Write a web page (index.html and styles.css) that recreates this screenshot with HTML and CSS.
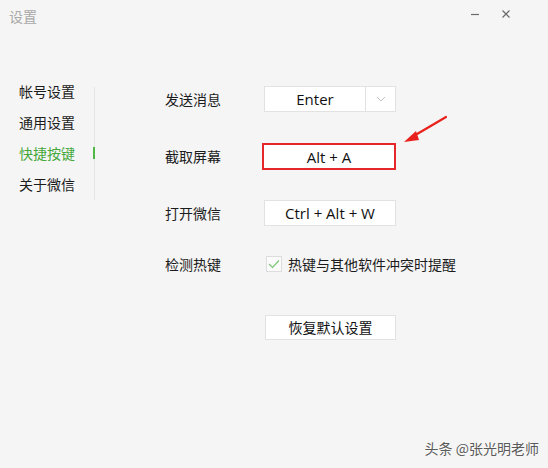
FILE: index.html
```
<!DOCTYPE html>
<html lang="zh-CN">
<head>
    <meta charset="utf-8">
    <title>设置</title>
    <link rel="stylesheet" href="styles.css">
</head>
<body>
    <div class="window">
        <div class="titlebar">
            <span class="title">设置</span>
            <div class="controls">
                <svg class="ctl" width="10" height="10" viewBox="0 0 10 10"><path d="M1 5.5h8" stroke="#6a6a6a" stroke-width="1.2"/></svg>
                <svg class="ctl" width="10" height="10" viewBox="0 0 10 10"><path d="M1.5 1.5l7 7M8.5 1.5l-7 7" stroke="#6a6a6a" stroke-width="1.2"/></svg>
            </div>
        </div>

        <div class="main">
            <div class="sidebar">
                <ul class="nav">
                    <li>帐号设置</li>
                    <li>通用设置</li>
                    <li class="active">快捷按键</li>
                    <li>关于微信</li>
                </ul>
            </div>

            <div class="content">
                <div class="row">
                    <span class="label">发送消息</span>
                    <div class="box select">
                        <span class="val">Enter</span>
                        <span class="drop">
                            <svg width="10" height="6" viewBox="0 0 10 6"><path d="M1 1l4 4 4-4" fill="none" stroke="#c4c4c4" stroke-width="1"/></svg>
                        </span>
                    </div>
                </div>
                <div class="row">
                    <span class="label">截取屏幕</span>
                    <div class="box marked">Alt + A</div>
                </div>
                <div class="row">
                    <span class="label">打开微信</span>
                    <div class="box">Ctrl + Alt + W</div>
                </div>
                <div class="row row-check">
                    <span class="label">检测热键</span>
                    <label class="check">
                        <span class="tick">
                            <svg width="12" height="10" viewBox="0 0 12 10"><path d="M1 5l3.5 3.5L11 1.5" fill="none" stroke="#7cc576" stroke-width="1.2"/></svg>
                        </span>
                        热键与其他软件冲突时提醒
                    </label>
                </div>
                <div class="row row-reset">
                    <span class="label"></span>
                    <div class="box btn">恢复默认设置</div>
                </div>
            </div>
        </div>

        <svg class="arrow" width="50" height="32" viewBox="0 0 50 32">
            <path d="M46 2L12 22" stroke="#e8211c" stroke-width="2.2" stroke-linecap="round"/>
            <path d="M4 27L16 16L19 25Z" fill="#e8211c"/>
        </svg>

        <div class="mark">头条 @张光明老师</div>
    </div>
</body>
</html>
```

FILE: styles.css
```
body {
    margin: 0;
    font-family: "Noto Sans CJK SC", sans-serif;
    font-size: 14px;
    color: #1c1c1c;
}
.window {
    position: relative;
    width: 548px;
    height: 468px;
    background: #f5f5f5;
    overflow: hidden;
}
.titlebar {
    height: 32px;
    display: flex;
    justify-content: space-between;
    align-items: center;
    padding: 0 37px 0 9px;
}
.title {
    color: #a8a8a8;
    font-size: 14px;
    margin-top: -1px;
}
.controls {
    display: flex;
    gap: 21px;
    margin-top: -5px;
}
.main {
    display: flex;
    padding-top: 54px;
}
.sidebar {
    position: relative;
    width: 94px;
    height: 113px;
    margin-top: 1px;
    border-right: 1px solid #e6e6e6;
}
.nav {
    list-style: none;
    margin: -11px 0 0;
    padding: 0 0 0 19px;
}
.nav li {
    line-height: 31px;
    height: 31px;
}
.nav li.active {
    color: #45a83b;
    position: relative;
}
.nav li.active::after {
    content: "";
    position: absolute;
    left: 74px;
    top: 9px;
    width: 2px;
    height: 12px;
    background: #50b845;
}
.content {
    padding-left: 70px;
    display: flex;
    flex-direction: column;
    gap: 31px;
}
.row {
    display: flex;
    align-items: center;
    height: 26px;
}
.row-check {
    margin-top: -6px;
}
.row-reset {
    margin-top: 6px;
}
.label {
    width: 99px;
    flex: none;
}
.box {
    box-sizing: border-box;
    width: 132px;
    height: 26px;
    background: #fff;
    border: 1px solid #e2e2e2;
    display: flex;
    align-items: center;
    justify-content: center;
    font-family: "Open Sans", sans-serif;
    font-size: 15px;
    color: #111;
}
.select {
    justify-content: flex-start;
}
.select .val {
    width: 100px;
    text-align: center;
}
.select .drop {
    flex: 1;
    height: 100%;
    border-left: 1px solid #e2e2e2;
    display: flex;
    align-items: center;
    justify-content: center;
}
.marked {
    border: 2px solid #e5262a;
    width: 134px;
    height: 27px;
    margin-left: -2px;
    margin-top: 1px;
}
.check {
    display: flex;
    align-items: center;
    gap: 6px;
    margin-left: 2px;
}
.tick {
    box-sizing: border-box;
    width: 16px;
    height: 16px;
    border: 1px solid #dcdcdc;
    background: #fbfbfb;
    display: flex;
    align-items: center;
    justify-content: center;
}
.btn {
    font-family: "Noto Sans CJK SC", sans-serif;
    font-size: 14px;
    margin-left: 1px;
    width: 131px;
    height: 25px;
}
.arrow {
    position: absolute;
    left: 400px;
    top: 115px;
}
.mark {
    position: absolute;
    right: 9px;
    bottom: 10px;
    font-size: 14px;
    color: #5a5a5a;
    text-shadow: 0 0 2px #fff;
}
```
